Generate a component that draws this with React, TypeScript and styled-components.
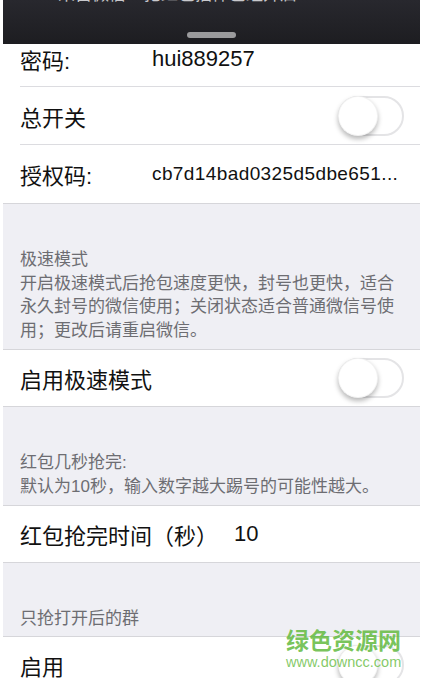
import styled, { createGlobalStyle } from 'styled-components';

const Global = createGlobalStyle`
  html, body {
    margin: 0;
    padding: 0;
    background: #ffffff;
  }
  body {
    font-family: "Liberation Sans", "Noto Sans CJK SC", sans-serif;
    -webkit-font-smoothing: antialiased;
  }
`;

const Screen = styled.div`
  position: relative;
  width: 421px;
  height: 678px;
  overflow: hidden;
  padding: 0 1px 0 3px;
  box-sizing: border-box;
  background: #ffffff;
`;

const PullDown = styled.div`
  height: 44px;
  background: linear-gradient(180deg, #28282e 0%, #1d1d21 100%);
  display: flex;
  flex-direction: column;
  align-items: center;
  overflow: hidden;
`;

const PeekText = styled.div`
  align-self: flex-start;
  margin: -15px 0 0 55px;
  font-size: 17px;
  line-height: 20px;
  color: #c8c8cc;
  white-space: nowrap;
  display: flex;
  align-items: center;
  gap: 4px;
`;

const PeekDot = styled.span`
  width: 10px;
  height: 10px;
  border-radius: 50%;
  background: #8e4fb3;
`;

const Handle = styled.div`
  margin-top: 27px;
  width: 49px;
  height: 6px;
  border-radius: 3px;
  background: #9b9b9d;
`;

const Group = styled.div<{ $top?: boolean }>`
  background: #ffffff;
  border-top: ${(p) => (p.$top ? '1px solid #d6d6da' : 'none')};
  border-bottom: 1px solid #d6d6da;
`;

const Row = styled.div`
  padding-left: 17px;
`;

const RowInner = styled.div<{ $h: number; $sep?: boolean; $lift?: number }>`
  height: ${(p) => p.$h}px;
  box-sizing: border-box;
  display: flex;
  align-items: center;
  padding-right: 16px;
  padding-bottom: ${(p) => p.$lift ?? 0}px;
  border-bottom: ${(p) => (p.$sep ? '1px solid #dcdce0' : 'none')};
  font-size: 22px;
  color: #111111;
`;

const Label = styled.span<{ $w?: number }>`
  width: ${(p) => (p.$w ? `${p.$w}px` : 'auto')};
  flex: ${(p) => (p.$w ? 'none' : '1')};
  white-space: nowrap;
`;

const Value = styled.span<{ $small?: boolean; $gap?: number }>`
  font-size: ${(p) => (p.$small ? '19px' : '22px')};
  letter-spacing: ${(p) => (p.$small ? '0.4px' : '0')};
  margin-left: ${(p) => p.$gap ?? 0}px;
  white-space: nowrap;
`;

const Switch = styled.div`
  position: relative;
  width: 66px;
  height: 40px;
  box-sizing: border-box;
  border: 2px solid #e4e4e6;
  border-radius: 20px;
  background: #ffffff;
  margin-left: auto;
`;

const Knob = styled.div`
  position: absolute;
  left: -2px;
  top: -2px;
  width: 40px;
  height: 40px;
  border-radius: 50%;
  background: #ffffff;
  box-sizing: border-box;
  border: 1px solid rgba(0, 0, 0, 0.05);
  box-shadow: 0 3px 5px rgba(0, 0, 0, 0.28);
`;

const Note = styled.div<{ $pb?: number }>`
  background: #efeff4;
  padding: 44px 20px ${(p) => p.$pb ?? 7}px 17px;
  font-size: 17px;
  line-height: 23.5px;
  color: #6d6d72;
`;

const NoteLine = styled.div``;

const Watermark = styled.div`
  position: absolute;
  left: 286px;
  top: 628px;
  display: flex;
  flex-direction: column;
  align-items: center;
  pointer-events: none;
`;

const MarkTitle = styled.span`
  font-size: 23px;
  font-weight: bold;
  line-height: 26px;
  color: rgba(98, 186, 62, 0.85);
`;

const MarkUrl = styled.span`
  font-size: 14.5px;
  line-height: 16px;
  color: rgba(110, 192, 76, 0.85);
`;

const Toggle = () => (
  <Switch>
    <Knob />
  </Switch>
);

export default function App() {
  return (
    <Screen>
      <Global />
      <PullDown>
        <PeekText>
          来自微信 <PeekDot /> 抢红包插件已经开启
        </PeekText>
        <Handle />
      </PullDown>

      <Group>
        <Row>
          <RowInner $h={43} $sep $lift={12}>
            <Label $w={132}>密码:</Label>
            <Value>hui889257</Value>
          </RowInner>
        </Row>
        <Row>
          <RowInner $h={58} $sep>
            <Label>总开关</Label>
            <Toggle />
          </RowInner>
        </Row>
        <Row>
          <RowInner $h={58}>
            <Label $w={132}>授权码:</Label>
            <Value $small>cb7d14bad0325d5dbe651...</Value>
          </RowInner>
        </Row>
      </Group>

      <Note>
        <NoteLine>极速模式</NoteLine>
        <NoteLine>
          开启极速模式后抢包速度更快，封号也更快，适合永久封号的微信使用；关闭状态适合普通微信号使用；更改后请重启微信。
        </NoteLine>
      </Note>

      <Group $top>
        <Row>
          <RowInner $h={56}>
            <Label>启用极速模式</Label>
            <Toggle />
          </RowInner>
        </Row>
      </Group>

      <Note>
        <NoteLine>红包几秒抢完:</NoteLine>
        <NoteLine>默认为10秒，输入数字越大踢号的可能性越大。</NoteLine>
      </Note>

      <Group $top>
        <Row>
          <RowInner $h={56}>
            <Label $w={196}>红包抢完时间（秒）</Label>
            <Value $gap={18}>10</Value>
          </RowInner>
        </Row>
      </Group>

      <Note $pb={5}>
        <NoteLine>只抢打开后的群</NoteLine>
      </Note>

      <Group $top>
        <Row>
          <RowInner $h={56}>
            <Label>启用</Label>
            <Toggle />
          </RowInner>
        </Row>
      </Group>

      <Watermark>
        <MarkTitle>绿色资源网</MarkTitle>
        <MarkUrl>www.downcc.com</MarkUrl>
      </Watermark>
    </Screen>
  );
}
